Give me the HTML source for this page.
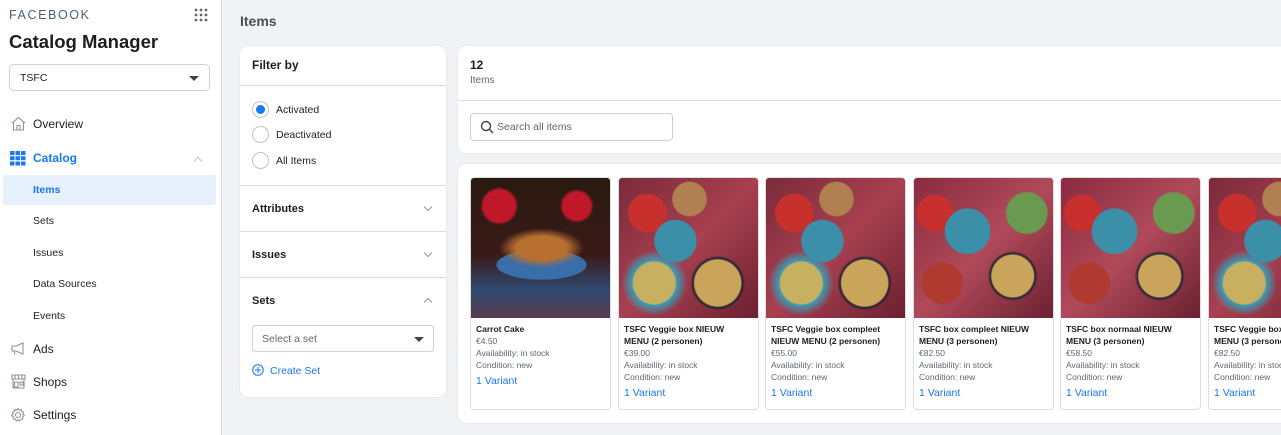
<!DOCTYPE html>
<html><head><meta charset="utf-8"><style>
*{box-sizing:border-box;margin:0;padding:0}
body{width:1281px;height:435px;overflow:hidden;background:#f0f2f5;font-family:"Liberation Sans",Arial,sans-serif;color:#1c1e21;position:relative}
.a{position:absolute}
.side{left:0;top:0;width:222px;height:435px;background:#fff;border-right:1px solid #dadde1}
.nav{left:33px;font-size:12px}
.sub{left:33px;font-size:10.5px;color:#1c1e21}
.panel{background:#fff;border-radius:8px;box-shadow:0 0 1px rgba(0,0,0,.2)}
.hr{height:1px;background:#dadde1;left:0;right:0}
.b{font-weight:bold;font-size:11px}
.radio{width:17px;height:17px;border:1px solid #bec3c9;border-radius:50%;left:12px}
.chev{width:6px;height:6px;border-right:1.5px solid #8d949e;border-bottom:1.5px solid #8d949e;transform:rotate(45deg)}
.card{top:177px;width:141px;height:233px;background:#fff;border:1px solid #dadde1;border-radius:4px;overflow:hidden}
.img{position:absolute;left:0;top:0;width:141px;height:140px}
.t{position:absolute;left:5px;top:145px;width:124px;font-size:8.5px;font-weight:bold;line-height:12px}
.d{font-size:8.5px;color:#606770;line-height:12px;font-weight:normal}
.v{font-size:10.5px;color:#1877f2;line-height:14px;margin-top:3px;font-weight:normal}
.food{background:radial-gradient(circle at 40% 45%,#3b8fa8 0 18%,transparent 19%),radial-gradient(circle at 70% 75%,#c9a45a 0 16%,#223 17%,transparent 19%),radial-gradient(circle at 25% 75%,#c7b060 0 14%,#3a9ab5 15%,transparent 22%),radial-gradient(circle at 20% 25%,#c8302e 0 12%,transparent 13%),radial-gradient(circle at 50% 15%,#b08050 0 12%,transparent 13%),linear-gradient(135deg,#7a2a3a,#a84050 50%,#6a2030)}
.food2{background:radial-gradient(circle at 38% 38%,#3b8fa8 0 18%,transparent 19%),radial-gradient(circle at 70% 70%,#c9a45a 0 15%,#223 16%,transparent 18%),radial-gradient(circle at 20% 75%,#b03a30 0 13%,transparent 14%),radial-gradient(circle at 80% 25%,#6a9a50 0 13%,transparent 14%),radial-gradient(circle at 15% 25%,#c8302e 0 11%,transparent 12%),linear-gradient(135deg,#8a2a40,#b04a5a 50%,#6a2030)}
.cake{background:radial-gradient(ellipse 30% 14% at 50% 50%,#b87030 0 60%,transparent 100%),radial-gradient(ellipse 45% 15% at 50% 62%,#3a6ea8 0 70%,transparent 72%),radial-gradient(circle at 20% 20%,#c01828 0 10%,transparent 12%),radial-gradient(circle at 75% 20%,#c01828 0 9%,transparent 11%),linear-gradient(180deg,#2a1a10 0,#3a1a18 55%,#304a70 80%,#5a3a50)}
</style></head><body>
<div class="a side">
 <div class="a" style="left:9px;top:8px;font-size:12.5px;letter-spacing:1.6px;color:#4b5f7a">FACEBOOK</div>
 <svg class="a" style="left:194px;top:8px" width="14" height="14"><g fill="#606770"><circle cx="2" cy="2" r="1.4"/><circle cx="7" cy="2" r="1.4"/><circle cx="12" cy="2" r="1.4"/><circle cx="2" cy="7" r="1.4"/><circle cx="7" cy="7" r="1.4"/><circle cx="12" cy="7" r="1.4"/><circle cx="2" cy="12" r="1.4"/><circle cx="7" cy="12" r="1.4"/><circle cx="12" cy="12" r="1.4"/></g></svg>
 <div class="a" style="left:9px;top:31px;font-size:18.5px;font-weight:bold">Catalog Manager</div>
 <div class="a" style="left:9px;top:64px;width:201px;height:27px;border:1px solid #ccd0d5;border-radius:5px;font-size:10.5px;padding:7px 0 0 10px">TSFC<div class="a" style="right:10px;top:11px;border:5px solid transparent;border-top:5px solid #444;border-bottom:0"></div></div>
 <svg class="a" style="left:11px;top:116px" width="15" height="15" fill="none" stroke="#8d949e" stroke-width="1.1"><path d="M1 7 L7.5 1.5 L14 7 M2.5 6 V14 H12.5 V6 M6 14 V9.5 H9 V14"/></svg>
 <div class="a nav" style="top:117px">Overview</div>
 <svg class="a" style="left:10px;top:151px" width="16" height="15" fill="#1877f2"><rect x="0" y="0" width="4.5" height="4" /><rect x="5.5" y="0" width="4.5" height="4"/><rect x="11" y="0" width="4.5" height="4"/><rect x="0" y="5.2" width="4.5" height="4"/><rect x="5.5" y="5.2" width="4.5" height="4"/><rect x="11" y="5.2" width="4.5" height="4"/><rect x="0" y="10.5" width="4.5" height="4"/><rect x="5.5" y="10.5" width="4.5" height="4"/><rect x="11" y="10.5" width="4.5" height="4"/></svg>
 <div class="a nav" style="top:151px;color:#1877f2;font-weight:bold">Catalog</div>
 <div class="a chev" style="left:195px;top:158px;transform:rotate(-135deg);border-color:#bec3c9"></div>
 <div class="a" style="left:3px;top:175px;width:213px;height:30px;background:#e7f0fd;border-radius:3px"></div>
 <div class="a sub" style="top:184px;color:#1877f2;font-weight:bold">Items</div>
 <div class="a sub" style="top:215px">Sets</div>
 <div class="a sub" style="top:247px">Issues</div>
 <div class="a sub" style="top:278px">Data Sources</div>
 <div class="a sub" style="top:310px">Events</div>
 <svg class="a" style="left:11px;top:342px" width="15" height="13" fill="none" stroke="#8d949e" stroke-width="1.1"><path d="M1 4 H5 L12 1 V12 L5 9 H1 Z M3 9 L4 12.5"/></svg>
 <div class="a nav" style="top:342px">Ads</div>
 <svg class="a" style="left:11px;top:374px" width="15" height="15" fill="none" stroke="#8d949e" stroke-width="1.1"><path d="M1 1 H14 V5 H1 Z M2 5 V14 H13 V5 M3.5 8 H7 V13 H3.5 Z M9 8 H12 V11 H9 Z M4 1 V5 M7.5 1 V5 M11 1 V5"/></svg>
 <div class="a nav" style="top:375px">Shops</div>
 <svg class="a" style="left:10px;top:407px" width="16" height="16" fill="none" stroke="#8d949e" stroke-width="1.1"><circle cx="8" cy="8" r="2.5"/><path d="M8 1.5 L9.3 3.2 L11.4 2.6 L11.6 4.5 L13.6 5.2 L12.8 7.2 L14.3 8.6 L12.6 9.8 L12.9 11.9 L10.8 12 L9.7 13.9 L8 12.7 L6.3 13.9 L5.2 12 L3.1 11.9 L3.4 9.8 L1.7 8.6 L3.2 7.2 L2.4 5.2 L4.4 4.5 L4.6 2.6 L6.7 3.2 Z"/></svg>
 <div class="a nav" style="top:408px">Settings</div>
</div>

<div class="a" style="left:240px;top:13px;font-size:14px;font-weight:bold;color:#4b4f56">Items</div>

<div class="a panel" style="left:240px;top:46px;width:206px;height:351px">
 <div class="a b" style="left:12px;top:12px;font-size:12px">Filter by</div>
 <div class="a hr" style="top:39px"></div>
 <div class="a radio" style="top:55px"><div class="a" style="left:3px;top:3px;width:9px;height:9px;border-radius:50%;background:#1877f2"></div></div>
 <div class="a" style="left:36px;top:58px;font-size:10.5px">Activated</div>
 <div class="a radio" style="top:80px"></div>
 <div class="a" style="left:36px;top:83px;font-size:10.5px">Deactivated</div>
 <div class="a radio" style="top:106px"></div>
 <div class="a" style="left:36px;top:109px;font-size:10.5px">All Items</div>
 <div class="a hr" style="top:139px"></div>
 <div class="a b" style="left:12px;top:157px">Attributes</div>
 <div class="a chev" style="left:185px;top:158px"></div>
 <div class="a hr" style="top:185px"></div>
 <div class="a b" style="left:12px;top:203px">Issues</div>
 <div class="a chev" style="left:185px;top:204px"></div>
 <div class="a hr" style="top:231px"></div>
 <div class="a b" style="left:12px;top:249px">Sets</div>
 <div class="a chev" style="left:185px;top:253px;transform:rotate(-135deg)"></div>
 <div class="a" style="left:12px;top:279px;width:182px;height:27px;border:1px solid #ccd0d5;border-radius:4px;font-size:10.5px;color:#606770;padding:7px 0 0 9px">Select a set<div class="a" style="right:9px;top:11px;border:5px solid transparent;border-top:5px solid #444;border-bottom:0"></div></div>
 <svg class="a" style="left:12px;top:318px" width="12" height="12" fill="none" stroke="#1877f2" stroke-width="1"><circle cx="6" cy="6" r="5.3"/><path d="M6 3 V9 M3 6 H9"/></svg>
 <div class="a" style="left:30px;top:319px;font-size:10.5px;color:#1877f2">Create Set</div>
</div>

<div class="a panel" style="left:458px;top:46px;width:830px;height:107px;border-radius:8px 0 0 8px">
 <div class="a" style="left:12px;top:12px;font-size:12px;font-weight:bold">12</div>
 <div class="a" style="left:12px;top:29px;font-size:10px;color:#606770">Items</div>
 <div class="a hr" style="top:54px"></div>
 <div class="a" style="left:12px;top:67px;width:203px;height:28px;border:1px solid #ccd0d5;border-radius:4px"></div>
 <svg class="a" style="left:22px;top:74px" width="14" height="14" fill="none" stroke="#444" stroke-width="1.4"><circle cx="6" cy="6" r="4.5"/><path d="M9.3 9.3 L13 13"/></svg>
 <div class="a" style="left:39px;top:75px;font-size:10.5px;color:#606770">Search all items</div>
</div>

<div class="a panel" style="left:458px;top:164px;width:830px;height:259px;border-radius:8px 0 0 8px"></div>

<div class="a card" style="left:470px"><div class="img cake"></div><div class="t">Carrot Cake<div class="d">€4.50<br>Availability: in stock<br>Condition: new</div><div class="v">1 Variant</div></div></div>
<div class="a card" style="left:618px"><div class="img food"></div><div class="t">TSFC Veggie box NIEUW MENU (2 personen)<div class="d">€39.00<br>Availability: in stock<br>Condition: new</div><div class="v">1 Variant</div></div></div>
<div class="a card" style="left:765px"><div class="img food"></div><div class="t">TSFC Veggie box compleet NIEUW MENU (2 personen)<div class="d">€55.00<br>Availability: in stock<br>Condition: new</div><div class="v">1 Variant</div></div></div>
<div class="a card" style="left:913px"><div class="img food2"></div><div class="t">TSFC box compleet NIEUW MENU (3 personen)<div class="d">€82.50<br>Availability: in stock<br>Condition: new</div><div class="v">1 Variant</div></div></div>
<div class="a card" style="left:1060px"><div class="img food2"></div><div class="t">TSFC box normaal NIEUW MENU (3 personen)<div class="d">€58.50<br>Availability: in stock<br>Condition: new</div><div class="v">1 Variant</div></div></div>
<div class="a card" style="left:1208px"><div class="img food"></div><div class="t">TSFC Veggie box NIEUW MENU (3 personen)<div class="d">€82.50<br>Availability: in stock<br>Condition: new</div><div class="v">1 Variant</div></div></div>
</body></html>
